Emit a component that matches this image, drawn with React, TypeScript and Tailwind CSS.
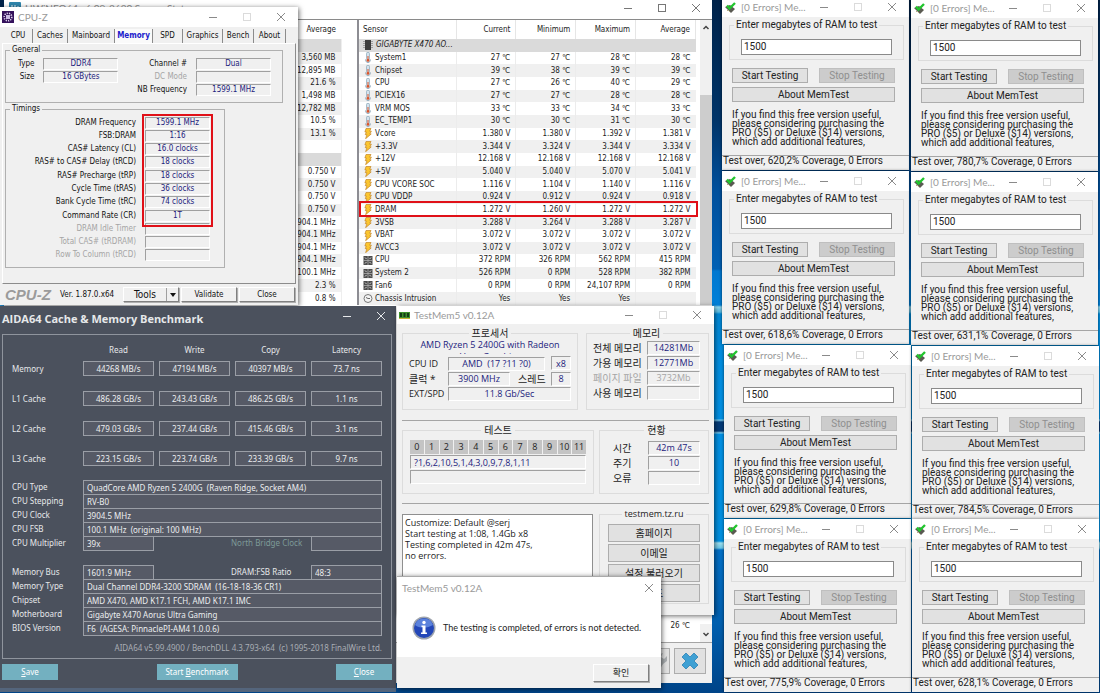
import React, { useId, useState } from "react";

type Glyph = "min" | "max" | "close";

interface WindowButtonsProps {
    glyphs?: Glyph[];
    className?: string;
    dimMax?: boolean;
}

const WindowButtons: React.FC<WindowButtonsProps> = ({ glyphs = ["min", "max", "close"], className = "gap-6 text-[#8a8a8a]", dimMax = true }) => (
    <div className={`flex items-center ${className}`}>
        {glyphs.map((glyph) => (
            <button key={glyph} type="button" aria-label={glyph} className={glyph === "max" && dimMax ? "opacity-30" : ""}>
                <svg width="10" height="10" viewBox="0 0 10 10" fill="none" stroke="currentColor" className="block">
                    {glyph === "min" && <path d="M1 5.5h8" />}
                    {glyph === "max" && <rect x="1.5" y="1.5" width="7" height="7" />}
                    {glyph === "close" && <path d="M1 1l8 8M9 1L1 9" />}
                </svg>
            </button>
        ))}
    </div>
);

/* ---------------------------------- CPU-Z ---------------------------------- */

interface FieldProps {
    label: string;
    value?: string;
    disabled?: boolean;
    width?: string;
}

const CpuField: React.FC<FieldProps> = ({ label, value = "", disabled, width = "w-[75px]" }) => (
    <label className={`flex justify-end items-center gap-[9px] h-[13px] ${disabled ? "text-[#a5a5a5]" : ""}`}>
        <span className="whitespace-nowrap">{label}</span>
        <input
            readOnly
            disabled={disabled}
            value={value}
            className={`${width} h-[12px] text-center text-[#22227c] border border-t-[#a0a0a0] border-l-[#a0a0a0] border-b-white border-r-white`}
        />
    </label>
);

const cpuTabs = [
    { name: "CPU", width: "w-[29px]" },
    { name: "Caches", width: "w-[35px]" },
    { name: "Mainboard", width: "w-[47px]" },
    { name: "Memory", width: "w-[38px]" },
    { name: "SPD", width: "w-[30px]" },
    { name: "Graphics", width: "w-[40px]" },
    { name: "Bench", width: "w-[31px]" },
    { name: "About", width: "w-[32px]" },
];

const timings = [
    ["DRAM Frequency", "1599.1 MHz"],
    ["FSB:DRAM", "1:16"],
    ["CAS# Latency (CL)", "16.0 clocks"],
    ["RAS# to CAS# Delay (tRCD)", "18 clocks"],
    ["RAS# Precharge (tRP)", "18 clocks"],
    ["Cycle Time (tRAS)", "36 clocks"],
    ["Bank Cycle Time (tRC)", "74 clocks"],
    ["Command Rate (CR)", "1T"],
    ["DRAM Idle Timer", ""],
    ["Total CAS# (tRDRAM)", ""],
    ["Row To Column (tRCD)", ""],
];

const raisedButton = "border border-t-white border-l-white border-b-[#808080] border-r-[#808080] shadow-[1px_1px_0_#b0b0b0]";

const CpuZ: React.FC = () => {
    const [tab, setTab] = useState("Memory");

    return (
        <section className="absolute left-0 top-[7px] w-[298px] h-[298px] flex flex-col bg-[#f0f0f0] text-[8px] leading-[12px] text-[#111] font-['DejaVu_Sans_Condensed',sans-serif] shadow-[1px_1px_5px_rgba(0,0,0,0.6)]">
            <header className="h-[20px] shrink-0 bg-white flex items-center justify-between pl-[2px] pr-3 text-[#9a9a9a]">
                <div className="flex items-center gap-1">
                    <svg width="12" height="12" viewBox="0 0 12 12" fill="none">
                        <rect width="12" height="12" fill="#35125c" />
                        <circle cx="6" cy="6" r="3.8" stroke="#ded3ee" strokeWidth="1.6" strokeDasharray="1.2 1.1" />
                        <rect x="4" y="4" width="4" height="4" fill="#c9b9e2" />
                    </svg>
                    <span className="text-[10px] font-['Lato',sans-serif]">CPU-Z</span>
                </div>
                <WindowButtons />
            </header>
            <div role="tablist" className="h-[16px] shrink-0 flex items-end pl-1">
                {cpuTabs.map(({ name, width }) => (
                    <button
                        key={name}
                        type="button"
                        role="tab"
                        aria-selected={tab === name}
                        onClick={() => setTab(name)}
                        className={`${width} h-[14px] border-r border-[#8c8c8c] whitespace-nowrap ${tab === name ? "text-[#1c1ccc] font-bold bg-[#fafafa]" : ""}`}
                    >
                        {name}
                    </button>
                ))}
            </div>
            <div className="flex-1 mx-[2px] border-t border-l border-t-white border-l-white border-r border-b border-r-[#8c8c8c] border-b-[#8c8c8c] px-[2px]">
                <fieldset className="border border-[#b0b0b0] w-[278px] h-[59px] pl-[12px] pr-[11px]">
                    <legend className="ml-[-8px] px-[2px]">General</legend>
                    <div className="flex justify-between pt-[1px]">
                        <div>
                            <CpuField label="Type" value="DDR4" />
                            <CpuField label="Size" value="16 GBytes" />
                        </div>
                        <div>
                            <CpuField label="Channel #" value="Dual" />
                            <CpuField label="DC Mode" disabled />
                            <CpuField label="NB Frequency" value="1599.1 MHz" />
                        </div>
                    </div>
                </fieldset>
                <fieldset className="relative border border-[#b0b0b0] w-[220px] h-[165px] px-[14px]">
                    <legend className="ml-[-10px] px-[2px]">Timings</legend>
                    <div className="h-[147px] pt-[1px] flex flex-col justify-between">
                        {timings.map(([label, value]) => (
                            <CpuField key={label} label={label} value={value} disabled={!value} width="w-[65px]" />
                        ))}
                    </div>
                    <div className="absolute right-[11px] top-[-1px] w-[71px] h-[113px] border-2 border-[#e01018] pointer-events-none"></div>
                </fieldset>
            </div>
            <footer className="h-[21px] shrink-0 flex items-center gap-[2px] pl-[5px] pr-[3px]">
                <strong className="w-[53px] text-[15px] leading-4 italic text-[#9b9b9b] font-['Liberation_Sans',sans-serif]">CPU-Z</strong>
                <span className="flex-1 whitespace-nowrap">Ver. 1.87.0.x64</span>
                <div className={`flex h-[15px] w-[56px] ${raisedButton}`}>
                    <button type="button" className="flex-1 text-[10px]">Tools</button>
                    <button type="button" aria-label="More tools" className="w-[12px] border-l border-[#a0a0a0] flex items-center justify-center">
                        <svg width="6" height="4" viewBox="0 0 6 4"><path d="M0 0h6L3 4z" fill="#111" /></svg>
                    </button>
                </div>
                <button type="button" className={`h-[15px] w-[56px] ${raisedButton}`}>Validate</button>
                <button type="button" className={`h-[15px] w-[56px] ${raisedButton}`}>Close</button>
            </footer>
        </section>
    );
};

/* ---------------------------------- HWiNFO ---------------------------------- */

type SensorKind = "temp" | "volt" | "fan" | "clock";

interface SensorRow {
    kind: SensorKind;
    name: string;
    values: string[];
}

const sensors: SensorRow[] = [
    { kind: "temp", name: "System1", values: ["27 ℃", "27 ℃", "28 ℃", "28 ℃"] },
    { kind: "temp", name: "Chipset", values: ["39 ℃", "38 ℃", "39 ℃", "39 ℃"] },
    { kind: "temp", name: "CPU", values: ["27 ℃", "26 ℃", "40 ℃", "29 ℃"] },
    { kind: "temp", name: "PCIEX16", values: ["27 ℃", "27 ℃", "28 ℃", "28 ℃"] },
    { kind: "temp", name: "VRM MOS", values: ["33 ℃", "33 ℃", "34 ℃", "33 ℃"] },
    { kind: "temp", name: "EC_TEMP1", values: ["30 ℃", "30 ℃", "31 ℃", "30 ℃"] },
    { kind: "volt", name: "Vcore", values: ["1.380 V", "1.380 V", "1.392 V", "1.381 V"] },
    { kind: "volt", name: "+3.3V", values: ["3.344 V", "3.324 V", "3.344 V", "3.334 V"] },
    { kind: "volt", name: "+12V", values: ["12.168 V", "12.168 V", "12.168 V", "12.168 V"] },
    { kind: "volt", name: "+5V", values: ["5.040 V", "5.040 V", "5.070 V", "5.041 V"] },
    { kind: "volt", name: "CPU VCORE SOC", values: ["1.116 V", "1.104 V", "1.140 V", "1.116 V"] },
    { kind: "volt", name: "CPU VDDP", values: ["0.924 V", "0.912 V", "0.924 V", "0.918 V"] },
    { kind: "volt", name: "DRAM", values: ["1.272 V", "1.260 V", "1.272 V", "1.272 V"] },
    { kind: "volt", name: "3VSB", values: ["3.288 V", "3.264 V", "3.288 V", "3.287 V"] },
    { kind: "volt", name: "VBAT", values: ["3.072 V", "3.072 V", "3.072 V", "3.072 V"] },
    { kind: "volt", name: "AVCC3", values: ["3.072 V", "3.072 V", "3.072 V", "3.072 V"] },
    { kind: "fan", name: "CPU", values: ["372 RPM", "326 RPM", "562 RPM", "415 RPM"] },
    { kind: "fan", name: "System 2", values: ["526 RPM", "0 RPM", "528 RPM", "382 RPM"] },
    { kind: "fan", name: "Fan6", values: ["0 RPM", "0 RPM", "24,107 RPM", "0 RPM"] },
    { kind: "clock", name: "Chassis Intrusion", values: ["Yes", "Yes", "Yes", ""] },
];

// null is a grey group heading
const averages: (string | null)[] = [
    null, "3,560 MB", "12,895 MB", "21.6 %", "1,498 MB", "12,782 MB", "10.5 %", "13.1 %", "", null,
    "0.750 V", "0.750 V", "0.750 V", "0.750 V", "3,904.1 MHz", "3,904.1 MHz", "3,904.1 MHz", "3,904.1 MHz", "100.1 MHz", "2.3 %", "0.8 %",
];

const SensorIcon: React.FC<{ kind: SensorKind }> = ({ kind }) => (
    <svg width="10" height="11" viewBox="0 0 10 11" fill="none" className="shrink-0">
        {kind === "temp" && (
            <>
                <path d="M3.6 1.5a1.4 1.4 0 0 1 2.8 0v5a2.3 2.3 0 1 1-2.8 0z" fill="#dce9f2" stroke="#8aa6b8" strokeWidth=".8" />
                <path d="M5 4v4" stroke="#d8552c" strokeWidth="1" />
                <circle cx="5" cy="8.4" r="1.4" fill="#d8552c" />
            </>
        )}
        {kind === "volt" && <path d="M3 .5h5L6.6 3.2h1.8L6.8 6h1.4L2.6 10.7l1.3-4H2.2L3.4 4H1.9z" fill="#fbc62f" stroke="#c4862a" strokeWidth=".7" />}
        {kind === "fan" && (
            <>
                <rect x=".5" y="1" width="9" height="9" fill="#4c4c4c" />
                <path d="M5 1v9M.5 5.5h9" stroke="#b8b8b8" strokeWidth=".7" />
                <path d="M2 2.5l1.6 1.6M8 2.5L6.5 4.1M2 8.5l1.6-1.6M8 8.5L6.5 6.9" stroke="#d8d8d8" />
            </>
        )}
        {kind === "clock" && (
            <>
                <circle cx="5" cy="5.5" r="4" fill="#f4f4f4" stroke="#777" />
                <path d="M3 4.5l2 1h2" stroke="#666" />
            </>
        )}
    </svg>
);

const HwInfo: React.FC = () => (
    <section className="absolute left-[4px] top-[-4px] w-[708px] h-[687px] flex flex-col bg-white text-[8px] leading-[12px] text-[#1c1c1c] font-['DejaVu_Sans_Condensed','Noto_Sans_CJK_KR',sans-serif]">
        <header className="h-[23px] shrink-0 flex items-center justify-between pl-[5px] pr-[11px]">
            <div className="flex items-center gap-1 text-[10px] text-[#8d8d8d] font-['Lato',sans-serif]">
                <svg width="12" height="12" viewBox="0 0 12 12"><rect width="12" height="12" rx="1" fill="#2f86ad" /><path d="M3 3v6M3 6h3M6 3v6M8 5h2v4" stroke="#e8f4fa" fill="none" /></svg>
                <span>HWiNFO64 v6.09-3620 Sensor Status</span>
            </div>
            <WindowButtons className="gap-6 text-[#777]" dimMax={false} />
        </header>
        <div className="h-[286px] shrink-0 flex border-t border-[#8a8a8a]">
            <table className="flex-1 h-full table-fixed border-collapse">
                <thead>
                    <tr className="h-[19px]">
                        <th className="font-normal text-right pr-[5px]">Average</th>
                        <th className="w-[16px]" aria-label="spacer"></th>
                    </tr>
                </thead>
                <tbody>
                    {averages.map((value, index) => (
                        <tr key={index} className={value === null ? "bg-[#dadada]" : index % 2 === 1 ? "bg-[#f0f0f0]" : ""}>
                            <td className="p-0 pr-[5px] text-right whitespace-nowrap">{value || "\u00a0"}</td>
                            <td className="p-0 bg-white border-l border-[#eee]"></td>
                        </tr>
                    ))}
                </tbody>
            </table>
            <div className="relative w-[355px] flex border-l-2 border-[#8d8d93]">
                <table className="w-[337px] h-full table-fixed border-collapse">
                    <thead>
                        <tr className="h-[19px]">
                            <th className="w-[97px] font-normal text-left pl-1 border-r border-[#e6e6e6]">Sensor</th>
                            {["Current", "Minimum", "Maximum", "Average"].map((title) => (
                                <th key={title} className="font-normal text-right pr-[5px] border-r border-[#e6e6e6]">{title}</th>
                            ))}
                        </tr>
                    </thead>
                    <tbody>
                        <tr className="bg-[#dadada]">
                            <td className="p-0 pl-1">
                                <div className="flex items-center gap-[3px] italic whitespace-nowrap">
                                    <svg width="10" height="10" viewBox="0 0 10 10"><path d="M2 0h6v10H2z" fill="#3c3c3c" /><path d="M1 1v8M9 1v8" stroke="#666" strokeDasharray="1 1" /></svg>
                                    GIGABYTE X470 AO...
                                </div>
                            </td>
                            <td></td><td></td><td></td><td></td>
                        </tr>
                        {sensors.map((row, index) => (
                            <tr key={index} className={index % 2 === 1 ? "bg-[#f0f0f0]" : ""}>
                                <td className="p-0 pl-1">
                                    <div className="flex items-center gap-[2px] h-[12px] whitespace-nowrap">
                                        <SensorIcon kind={row.kind} />
                                        {row.name}
                                    </div>
                                </td>
                                {row.values.map((value, col) => (
                                    <td key={col} className="p-0 pr-[5px] text-right whitespace-nowrap border-l border-[#ececec]">{value}</td>
                                ))}
                            </tr>
                        ))}
                    </tbody>
                </table>
                <div className="ml-auto w-[12px] flex flex-col bg-[#f0f0f0] text-[#444]">
                    <svg width="12" height="18" viewBox="0 0 12 18" fill="none" stroke="currentColor" strokeWidth="1.5"><path d="M3.5 9L6 6.5 8.5 9" /></svg>
                    <div className="mt-[57px] flex-1 bg-[#cdcdcd]"></div>
                </div>
                <div className="absolute left-0 top-[181px] w-[339px] h-[16px] border-2 border-[#e01018]"></div>
            </div>
        </div>
        <div className="flex-1 flex items-end justify-end">
            <span className="pr-[10px] pb-[10px]">26 ℃</span>
            <svg width="12" height="18" viewBox="0 0 12 18" fill="none" stroke="#444" strokeWidth="1.5" className="bg-[#f0f0f0]"><path d="M3.5 9L6 11.5 8.5 9" /></svg>
        </div>
        <footer className="h-[41px] shrink-0 bg-[#f0f0f0] border-t border-[#a5a5a5] flex items-start justify-end gap-1 pt-[5px] pr-[6px]">
            <button type="button" aria-label="Settings" className="w-[32px] h-[26px] border border-[#adadad] bg-[#e1e1e1] flex items-center justify-end">
                <svg width="16" height="22" viewBox="0 0 16 22"><path d="M4 12l3-8 3-1-2 4 3 2 3-3v5l-4 3-3 5H3z" fill="#a9adb0" /></svg>
            </button>
            <button type="button" aria-label="Close sensors" className="w-[32px] h-[26px] border border-[#adadad] bg-[#e1e1e1] flex items-center justify-center">
                <svg width="18" height="18" viewBox="0 0 18 18"><path d="M5 1l4 4 4-4 4 4-4 4 4 4-4 4-4-4-4 4-4-4 4-4-4-4z" fill="#3fa0d3" stroke="#2b82b5" strokeWidth=".8" /></svg>
            </button>
        </footer>
    </section>
);

/* ---------------------------------- AIDA64 ---------------------------------- */

const benchmark = [
    { name: "Memory", values: ["44268 MB/s", "47194 MB/s", "40397 MB/s", "73.7 ns"] },
    { name: "L1 Cache", values: ["486.28 GB/s", "243.43 GB/s", "486.25 GB/s", "1.1 ns"] },
    { name: "L2 Cache", values: ["479.03 GB/s", "237.44 GB/s", "415.46 GB/s", "3.1 ns"] },
    { name: "L3 Cache", values: ["223.15 GB/s", "223.74 GB/s", "233.39 GB/s", "9.7 ns"] },
];

const aidaInput = "border border-[#9a9ea6] bg-[#565a66] text-[#eceef0]";

const AidaField: React.FC<FieldProps> = ({ label, value = "", width = "flex-1" }) => (
    <label className="flex items-start h-[14px] grow shrink-0">
        <span className="w-[71px] shrink-0 leading-[14px] whitespace-nowrap">{label}</span>
        <input readOnly value={value} className={`${aidaInput} ${width} min-w-0 h-[15px] pl-[3px]`} />
    </label>
);

const AidaPair: React.FC<{ left: FieldProps; right: FieldProps; dim?: boolean }> = ({ left, right, dim }) => (
    <div className="flex h-[14px]">
        <AidaField {...left} width="w-[71px]" />
        <label className="flex items-start h-[14px]">
            <span className={`w-[80px] leading-[14px] whitespace-nowrap ${dim ? "text-[#7d9a98]" : ""}`}>{right.label}</span>
            <input readOnly disabled={dim} value={right.value ?? ""} className={`${aidaInput} w-[71px] h-[15px] pl-[3px]`} />
        </label>
    </div>
);

const aidaButton = "h-[16px] bg-[#73b0c0] text-white";

const Aida: React.FC = () => (
    <section className="absolute left-0 top-[306px] w-[396px] h-[386px] flex flex-col pl-[2px] pr-[4px] bg-[#4b515d] border-b-4 border-[#54657c] text-[8px] leading-[12px] text-[#e6e8ea] font-['Noto_Sans',sans-serif]">
        <header className="h-[28px] shrink-0 flex items-start justify-between pt-[5px] pr-[6px]">
            <h1 className="text-[11px] leading-[15px] font-bold font-['Open_Sans',sans-serif]">AIDA64 Cache &amp; Memory Benchmark</h1>
            <WindowButtons glyphs={["min", "close"]} className="gap-6 text-[#e6e8ea]" />
        </header>
        <div className="h-[325px] shrink-0 border border-[#8f949d] pl-[9px] pr-[9px] pt-[9px]">
            <div className="grid grid-cols-[66px_repeat(4,1fr)] gap-x-[5px] text-center">
                <span></span>
                <span>Read</span>
                <span>Write</span>
                <span>Copy</span>
                <span>Latency</span>
            </div>
            <div className="pt-[5px] flex flex-col gap-[15px]">
                {benchmark.map((row) => (
                    <div key={row.name} className="grid grid-cols-[66px_repeat(4,1fr)] gap-x-[5px] items-center">
                        <span>{row.name}</span>
                        {row.values.map((value, index) => (
                            <input key={index} readOnly aria-label={row.name} value={value} className={`${aidaInput} w-full min-w-0 h-[15px] text-center`} />
                        ))}
                    </div>
                ))}
            </div>
            <div className="mt-[14px] flex flex-col">
                <AidaField label="CPU Type" value="QuadCore AMD Ryzen 5 2400G  (Raven Ridge, Socket AM4)" />
                <AidaField label="CPU Stepping" value="RV-B0" />
                <AidaField label="CPU Clock" value="3904.5 MHz" />
                <AidaField label="CPU FSB" value="100.1 MHz  (original: 100 MHz)" />
                <AidaPair left={{ label: "CPU Multiplier", value: "39x" }} right={{ label: "North Bridge Clock" }} dim />
            </div>
            <div className="mt-[15px] flex flex-col">
                <AidaPair left={{ label: "Memory Bus", value: "1601.9 MHz" }} right={{ label: "DRAM:FSB Ratio", value: "48:3" }} />
                <AidaField label="Memory Type" value="Dual Channel DDR4-3200 SDRAM  (16-18-18-36 CR1)" />
                <AidaField label="Chipset" value="AMD X470, AMD K17.1 FCH, AMD K17.1 IMC" />
                <AidaField label="Motherboard" value="Gigabyte X470 Aorus Ultra Gaming" />
                <AidaField label="BIOS Version" value="F6  (AGESA: PinnaclePI-AM4 1.0.0.6)" />
            </div>
            <p className="mt-[7px] text-right text-[#a9adb4] whitespace-pre">AIDA64 v5.99.4900 / BenchDLL 4.3.793-x64  (c) 1995-2018 FinalWire Ltd.</p>
        </div>
        <footer className="pt-[5px] flex justify-between">
            <button type="button" className={`${aidaButton} w-[56px]`}><u>S</u>ave</button>
            <button type="button" className={`${aidaButton} w-[81px]`}>Start <u>B</u>enchmark</button>
            <button type="button" className={`${aidaButton} w-[56px]`}><u>C</u>lose</button>
        </footer>
    </section>
);

/* --------------------------------- TestMem5 --------------------------------- */

const sunken = "h-[14px] min-w-0 text-center text-[#22227c] border border-t-[#a0a0a0] border-l-[#a0a0a0] border-b-white border-r-white disabled:text-[#a5a5a5]";

const TmField: React.FC<FieldProps & { labelWidth?: string }> = ({ label, value = "", disabled, width = "w-full", labelWidth = "w-[39px]" }) => (
    <label className={`flex items-center h-[15px] ${disabled ? "text-[#a5a5a5]" : ""}`}>
        <span className={`${labelWidth} shrink-0 whitespace-nowrap`}>{label}</span>
        <input readOnly disabled={disabled} value={value} className={`${sunken} ${width}`} />
    </label>
);

const tmGroup = "shrink-0 min-w-0 border border-[#dcdcdc]";
const tmLegend = "mx-auto px-[3px] text-[10px]";
const tmButton = "h-[18px] border border-[#adadad] bg-[#e1e1e1] text-[10px]";

const TestMem: React.FC = () => (
    <section className="absolute left-[397px] top-[306px] w-[317px] h-[309px] bg-[#f0f0f0] text-[9px] leading-[12px] text-[#222] font-['Open_Sans','Noto_Sans_CJK_KR',sans-serif] shadow-[1px_1px_5px_rgba(0,0,0,0.6)]">
        <header className="h-[18px] bg-white flex items-center justify-between pl-[2px] pr-3 text-[#9a9a9a]">
            <div className="flex items-center gap-1 text-[10px] font-['Lato',sans-serif]">
                <svg width="11" height="9" viewBox="0 0 11 9"><path d="M0 1h11v6H0z" fill="#3d8f2b" /><path d="M1 2h2v4H1zM4.5 2h2v4h-2zM8 2h2v4H8z" fill="#143d16" /><path d="M0 7.5h11" stroke="#c9b438" /></svg>
                <span>TestMem5 v0.12A</span>
            </div>
            <WindowButtons />
        </header>
        <div className="px-[5px] pt-[3px]">
            <div className="flex justify-between pb-[10px] border-b border-[#a5a5a5]">
                <fieldset className={`${tmGroup} w-[176px] h-[83px] px-[6px]`}>
                    <legend className={tmLegend}>프로세서</legend>
                    <p className="h-[15px] mb-[2px] overflow-hidden whitespace-nowrap text-center text-[#22227c]">AMD Ryzen 5 2400G with Radeon<br />Vega Graphics</p>
                    <div className="flex justify-between">
                        <TmField label="CPU ID" value="AMD  (17 ?11 ?0)" width="w-[97px]" />
                        <input readOnly aria-label="Cores" value="x8" className={`${sunken} w-[20px]`} />
                    </div>
                    <div className="flex justify-between">
                        <TmField label="클럭 *" value="3900 MHz" width="w-[62px]" labelWidth="w-[39px] text-[10px]" />
                        <TmField label="스레드" value="8" width="w-[20px]" labelWidth="w-[33px] text-[10px]" />
                    </div>
                    <TmField label="EXT/SPD" value="11.8 Gb/Sec" />
                </fieldset>
                <fieldset className={`${tmGroup} w-[123px] h-[83px] pl-[6px] pr-[8px]`}>
                    <legend className={tmLegend}>메모리</legend>
                    <div className="pt-[1px]">
                        <TmField label="전체 메모리" value="14281Mb" labelWidth="w-[54px] text-[10px]" />
                        <TmField label="가용 메모리" value="12771Mb" labelWidth="w-[54px] text-[10px]" />
                        <TmField label="페이지 파일" value="3732Mb" labelWidth="w-[54px] text-[10px]" disabled />
                        <TmField label="사용 메모리" labelWidth="w-[54px] text-[10px]" />
                    </div>
                </fieldset>
            </div>
            <div className="flex justify-between pt-[3px] pb-[9px] border-b border-[#a5a5a5]">
                <fieldset className={`${tmGroup} w-[192px] h-[70px] px-[7px]`}>
                    <legend className={tmLegend}>테스트</legend>
                    <div className="grid grid-cols-12 gap-[1px] mt-[4px] mb-[1px]">
                        {Array.from({ length: 12 }, (_, n) => (
                            <span key={n} className="h-[14px] leading-[14px] bg-[#c4c4c4] text-center">{n}</span>
                        ))}
                    </div>
                    <input readOnly aria-label="Test order" value="?1,6,2,10,5,1,4,3,0,9,7,8,1,11" className={`${sunken} block w-full text-left pl-[3px]`} />
                    <input readOnly aria-label="Test status" value="" className={`${sunken} block w-full mt-[1px]`} />
                </fieldset>
                <fieldset className={`${tmGroup} w-[110px] h-[70px] pl-[13px] pr-[8px]`}>
                    <legend className={tmLegend}>현황</legend>
                    <div className="pt-[4px]">
                        <TmField label="시간" value="42m 47s" labelWidth="w-[35px] text-[10px]" />
                        <TmField label="주기" value="10" labelWidth="w-[35px] text-[10px]" />
                        <TmField label="오류" labelWidth="w-[35px] text-[10px]" />
                    </div>
                </fieldset>
            </div>
            <div className="flex justify-between pt-[4px]">
                <textarea
                    readOnly
                    aria-label="Log"
                    value={"Customize: Default @serj\nStart testing at 1:08, 1.4Gb x8\nTesting completed in 42m 47s,\nno errors."}
                    className="mt-[6px] w-[191px] h-[88px] leading-[11px] resize-none bg-white border border-[#8f8f8f] pl-[2px] pt-[2px]"
                />
                <fieldset className={`${tmGroup} w-[110px] h-[96px] px-[8px]`}>
                    <legend className="mx-auto px-[3px]">testmem.tz.ru</legend>
                    <div className="flex flex-col gap-[2px] pt-[4px]">
                        <button type="button" className={tmButton}>홈페이지</button>
                        <button type="button" className={tmButton}>이메일</button>
                        <button type="button" className={tmButton}>설정 불러오기</button>
                        <button type="button" className={tmButton}>로드</button>
                    </div>
                </fieldset>
            </div>
        </div>
    </section>
);

const DoneDialog: React.FC = () => (
    <section role="dialog" aria-label="TestMem5" className="absolute left-[397px] top-[576px] w-[264px] h-[112px] flex flex-col bg-white text-[9px] leading-[12px] text-[#222] border-t border-[#aaa] font-['Lato','Noto_Sans_CJK_KR',sans-serif] shadow-[1px_1px_5px_rgba(0,0,0,0.6)]">
        <header className="h-[21px] flex items-center justify-between pl-[5px] pr-[7px] text-[10px] text-[#9a9a9a]">
            <span>TestMem5 v0.12A</span>
            <WindowButtons glyphs={["close"]} />
        </header>
        <div className="flex-1 flex items-center gap-[7px] pl-[15px]">
            <svg width="24" height="24" viewBox="0 0 24 24">
                <circle cx="12" cy="12" r="11.5" fill="#9ea4ad" />
                <circle cx="12" cy="12" r="10" fill="#2347b8" />
                <path d="M3 9a9.5 9.5 0 0 1 18 0c-5 3-13 4-18 0z" fill="#5b82dc" />
                <circle cx="12" cy="6.5" r="1.7" fill="#fff" />
                <path d="M9.5 9.5h4v7H15V18H9v-1.500h1.500V11h-1z" fill="#fff" />
            </svg>
            <p className="whitespace-nowrap">The testing is completed, of errors is not detected.</p>
        </div>
        <footer className="h-[31px] bg-[#f0f0f0] flex items-center justify-end pr-[12px]">
            <button type="button" className={`w-[56px] h-[18px] ${raisedButton}`}>확인</button>
        </footer>
    </section>
);

/* --------------------------------- MemTest --------------------------------- */

interface MemTestProps {
    position: string;
    coverage: string;
}

const MemTest: React.FC<MemTestProps> = ({ position, coverage }) => {
    const [megabytes, setMegabytes] = useState("1500");
    const id = useId();

    return (
        <section className={`absolute ${position} w-[187px] h-[173px] flex flex-col bg-[#f0f0f0] text-[10px] leading-[12px] text-[#222] font-['Roboto',sans-serif] shadow-[0_0_3px_rgba(0,0,0,0.6)]`}>
            <header className="h-[20px] shrink-0 bg-white flex items-center justify-between pl-[3px] pr-3 text-[#9a9a9a]">
                <div className="flex items-center gap-[5px]">
                    <svg width="11" height="11" viewBox="0 0 11 11">
                        <path d="M0 5l5-2 5 4-4 4z" fill="#5a5a52" />
                        <path d="M2 8l1 1M4 9l1 1" stroke="#b9b17c" />
                        <path d="M2 3.5l2.5 3L10 1" stroke="#22c52e" strokeWidth="2.4" fill="none" />
                    </svg>
                    <span className="font-['Lato',sans-serif]">[0 Errors] Me...</span>
                </div>
                <WindowButtons />
            </header>
            <div className="flex-1 px-[7px] pt-[2px]">
                <fieldset className="h-[41px] border border-[#dcdcdc] px-[11px]">
                    <legend className="ml-[-7px] px-[2px] whitespace-nowrap"><label htmlFor={id}>Enter megabytes of RAM to test</label></legend>
                    <input
                        id={id}
                        value={megabytes}
                        onChange={(e) => setMegabytes(e.target.value)}
                        className="mt-[8px] block w-[151px] h-[16px] bg-white border border-[#8a8a8a] pl-[2px] pb-[2px]"
                    />
                </fieldset>
                <div className="px-[3px]">
                    <div className="flex justify-between pt-[8px] pr-[4px]">
                        <button type="button" className="w-[76px] h-[15px] leading-[13px] border border-[#adadad] bg-[#e1e1e1]">Start Testing</button>
                        <button type="button" disabled className="w-[76px] h-[15px] leading-[13px] border border-[#bfbfbf] bg-[#cccccc] text-[#8f8f8f]">Stop Testing</button>
                    </div>
                    <div className="pt-[4px] pr-[4px]">
                        <button type="button" className="block w-full h-[15px] leading-[13px] border border-[#adadad] bg-[#e1e1e1]">About MemTest</button>
                    </div>
                    <p className="pt-[8px] leading-[9px] whitespace-nowrap">
                        If you find this free version useful,<br />
                        please considering purchasing the<br />
                        PRO ($5) or Deluxe ($14) versions,<br />
                        which add additional features,
                    </p>
                </div>
            </div>
            <footer className="h-[15px] shrink-0 border-t border-[#a5a5a5] pl-[1px] leading-[10px]">Test over, {coverage} Coverage, 0 Errors</footer>
        </section>
    );
};

const memTests: MemTestProps[] = [
    { position: "left-[722px] top-[-3px]", coverage: "620,2%" },
    { position: "left-[911px] top-[-2px]", coverage: "780,7%" },
    { position: "left-[722px] top-[171px]", coverage: "618,6%" },
    { position: "left-[911px] top-[172px]", coverage: "631,1%" },
    { position: "left-[724px] top-[345px]", coverage: "629,8%" },
    { position: "left-[912px] top-[346px]", coverage: "784,5%" },
    { position: "left-[724px] top-[519px]", coverage: "775,9%" },
    { position: "left-[912px] top-[519px]", coverage: "628,1%" },
];

const App: React.FC = () => (
    <main className="relative w-full h-screen overflow-hidden bg-[linear-gradient(180deg,#00234a_0px,#003468_120px,#00509c_190px,#0060b4_269px,#0078d0_271px,#0080d8_305px,#8fd8f0_307px,#5cc0e8_312px,#008cdc_314px,#0090e4_419px,#7fd0f0_420px,#043a78_422px,#043a78_431px,#7fd0f0_433px,#0090e4_434px,#0090e0_541px,#9fe0f0_543px,#6cc8e8_548px,#0070c8_550px,#0060b0_620px,#004488_693px)]">
        <HwInfo />
        <CpuZ />
        <Aida />
        <TestMem />
        <DoneDialog />
        {memTests.map((win) => (
            <MemTest key={win.position} {...win} />
        ))}
    </main>
);

export default App;
